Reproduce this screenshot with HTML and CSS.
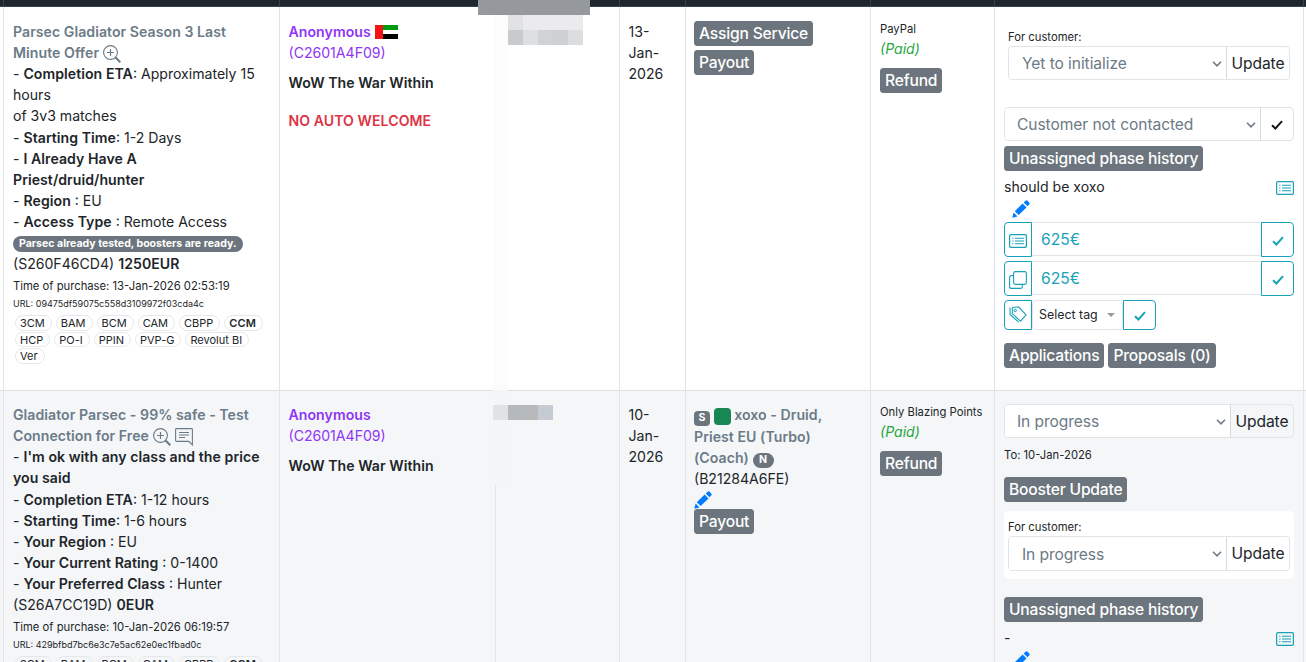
FILE: index.html
```
<!DOCTYPE html>
<html lang="en">
<head>
    <meta charset="UTF-8">
    <meta name="viewport" content="width=device-width, initial-scale=1.0">
    <title>Orders</title>
    <link rel="stylesheet" href="styles.css">
</head>
<body>
    <svg class="defs" width="0" height="0">
        <symbol id="zoom" viewBox="0 0 18 18">
            <circle cx="7.5" cy="7.5" r="6.9" fill="none" stroke="currentColor" stroke-width="1.1"/>
            <path d="M7.5 4v7M4 7.5h7" stroke="currentColor" stroke-width="1.2"/>
            <path d="M12.3 12.3l5 5" stroke="currentColor" stroke-width="2"/>
        </symbol>
        <symbol id="comment" viewBox="0 0 18 18">
            <path d="M1.5.6h15q.9 0 .9.9v15.4l-3.6-3.5H1.5q-.9 0-.9-.9v-11q0-.9.9-.9z" fill="none" stroke="currentColor" stroke-width="1.1"/>
            <path d="M4 4.5h10M4 7h10M4 9.5h6" stroke="currentColor" stroke-width="1.1"/>
        </symbol>
        <symbol id="list" viewBox="0 0 18 14">
            <rect x=".6" y=".6" width="16.8" height="12.8" rx="1.3" fill="none" stroke="currentColor" stroke-width="1.2"/>
            <path d="M6 4.2h9M6 7h9M6 9.8h9M3.2 4.2h1.3M3.2 7h1.3M3.2 9.8h1.3" stroke="currentColor" stroke-width="1.1"/>
        </symbol>
        <symbol id="copy" viewBox="0 0 18 18">
            <rect x="4.6" y=".6" width="12.8" height="12.8" rx="1.8" fill="none" stroke="currentColor" stroke-width="1.1"/>
            <path d="M4 4.6H2.4Q.6 4.6.6 6.4v9q0 2 2 2h9q1.8 0 1.8-1.8V14" fill="none" stroke="currentColor" stroke-width="1.1"/>
        </symbol>
        <symbol id="tags" viewBox="0 0 18 17">
            <path d="M3.4 1.5L9.5 1l7.6 7.9-5.6 6.3-8.2-7.5z" fill="none" stroke="currentColor" stroke-width="1.1" stroke-linejoin="round"/>
            <path d="M1 1.5v7l8.6 7.6" fill="none" stroke="currentColor" stroke-width="1.1"/>
            <circle cx="6.2" cy="4.4" r="1.2" fill="none" stroke="currentColor"/>
        </symbol>
        <symbol id="pencil" viewBox="0 0 18 18">
            <path d="M.3 17.7l1.3-5.2 3.9 3.9zM2.8 11.2l7.8-7.6 3.9 3.9-7.8 7.6zM11.7 2.6L13.6.8q1-.9 2 0l1.6 1.7q.9 1 0 1.9l-1.7 1.9z" fill="currentColor"/>
        </symbol>
        <symbol id="check" viewBox="0 0 12 10">
            <path d="M1 5.2l3.4 3.3L11 1.2" fill="none" stroke="currentColor" stroke-width="2"/>
        </symbol>
        <symbol id="chevron" viewBox="0 0 10 6">
            <path d="M1 .8l4 4 4-4" fill="none" stroke="currentColor" stroke-width="1.6"/>
        </symbol>
    </svg>

    <div class="orders">
        <div class="row head">
            <div></div><div></div><div></div><div></div><div></div><div></div><div></div><div></div>
        </div>

        <div class="row first">
            <div class="cell order">
                <a class="title">Parsec Gladiator Season 3 Last Minute Offer <svg class="icon"><use href="#zoom"/></svg></a>
                <div>- <b>Completion ETA</b>: Approximately 15 hours<br>of 3v3 matches</div>
                <div>- <b>Starting Time</b>: 1-2 Days</div>
                <div>- <b>I Already Have A Priest/druid/hunter</b></div>
                <div>- <b>Region</b> : EU</div>
                <div>- <b>Access Type</b> : Remote Access</div>
                <div class="note"><span class="pill">Parsec already tested, boosters are ready.</span></div>
                <div>(S260F46CD4) <b>1250EUR</b></div>
                <div class="time">Time of purchase: 13-Jan-2026 02:53:19</div>
                <div class="url">URL: 09475df59075c558d3109972f03cda4c</div>
                <div class="tags">
                    <span>3CM</span><span>BAM</span><span>BCM</span><span>CAM</span><span>CBPP</span><span><b>CCM</b></span>
                    <span>HCP</span><span>PO-I</span><span>PPIN</span><span>PVP-G</span><span>Revolut BI</span>
                    <span>Ver</span>
                </div>
            </div>
            <div class="cell">
                <div class="customer"><b>Anonymous</b> <svg class="flag" viewBox="0 0 23 14"><path fill="#009a10" d="M0 0h23v5H0z"/><path fill="#fff" d="M0 5h23v4H0z"/><path d="M0 9h23v5H0z"/><path fill="#f01414" d="M0 0h8v14H0z"/></svg><br>(C2601A4F09)</div>
                <div class="game">WoW The War Within</div>
                <div class="warning">NO AUTO WELCOME</div>
            </div>
            <div class="cell"></div>
            <div class="cell">13-<br>Jan-<br>2026</div>
            <div class="cell actions">
                <button class="btn">Assign Service</button>
                <button class="btn">Payout</button>
            </div>
            <div class="cell pay">
                <div class="method">PayPal</div>
                <div class="paid">(Paid)</div>
                <button class="btn">Refund</button>
            </div>
            <div class="cell status">
                <div class="panel">
                    <div class="label">For customer:</div>
                    <div class="group">
                        <div class="select">Yet to initialize<svg><use href="#chevron"/></svg></div>
                        <button class="update">Update</button>
                    </div>
                </div>
                <div class="group contact">
                    <div class="select">Customer not contacted<svg><use href="#chevron"/></svg></div>
                    <button class="tick"><svg><use href="#check"/></svg></button>
                </div>
                <button class="btn">Unassigned phase history</button>
                <div class="remark"><span>should be xoxo</span><svg class="list"><use href="#list"/></svg></div>
                <svg class="pencil"><use href="#pencil"/></svg>
                <div class="price">
                    <div class="addon"><svg class="list"><use href="#list"/></svg></div>
                    <div class="amount">625€</div>
                    <button class="tick"><svg><use href="#check"/></svg></button>
                </div>
                <div class="price">
                    <div class="addon"><svg class="copy"><use href="#copy"/></svg></div>
                    <div class="amount">625€</div>
                    <button class="tick"><svg><use href="#check"/></svg></button>
                </div>
                <div class="price tagpick">
                    <div class="addon"><svg class="tagicon"><use href="#tags"/></svg></div>
                    <div class="amount">Select tag<i class="caret"></i></div>
                    <button class="tick"><svg><use href="#check"/></svg></button>
                </div>
                <div class="buttons">
                    <button class="btn">Applications</button>
                    <button class="btn">Proposals (0)</button>
                </div>
            </div>
            <div class="cell"></div>
        </div>

        <div class="row second">
            <div class="cell order">
                <a class="title">Gladiator Parsec - 99% safe - Test Connection for Free <svg class="icon"><use href="#zoom"/></svg> <svg class="icon"><use href="#comment"/></svg></a>
                <div>- <b>I'm ok with any class and the price you said</b></div>
                <div>- <b>Completion ETA</b>: 1-12 hours</div>
                <div>- <b>Starting Time</b>: 1-6 hours</div>
                <div>- <b>Your Region</b> : EU</div>
                <div>- <b>Your Current Rating</b> : 0-1400</div>
                <div>- <b>Your Preferred Class</b> : Hunter</div>
                <div>(S26A7CC19D) <b>0EUR</b></div>
                <div class="time">Time of purchase: 10-Jan-2026 06:19:57</div>
                <div class="url">URL: 429bfbd7bc6e3c7e5ac62e0ec1fbad0c</div>
                <div class="tags">
                    <span>3CM</span><span>BAM</span><span>BCM</span><span>CAM</span><span>CBPP</span><span><b>CCM</b></span>
                </div>
            </div>
            <div class="cell">
                <div class="customer"><b>Anonymous</b><br>(C2601A4F09)</div>
                <div class="game">WoW The War Within</div>
            </div>
            <div class="cell"></div>
            <div class="cell">10-<br>Jan-<br>2026</div>
            <div class="cell booster">
                <a class="title"><span class="mark">S</span> <span class="square"></span> xoxo - Druid, Priest EU (Turbo) (Coach) <span class="mark round">N</span></a>
                <div>(B21284A6FE)</div>
                <svg class="pencil"><use href="#pencil"/></svg>
                <button class="btn">Payout</button>
            </div>
            <div class="cell pay">
                <div class="method">Only Blazing Points</div>
                <div class="paid">(Paid)</div>
                <button class="btn">Refund</button>
            </div>
            <div class="cell status">
                <div class="group">
                    <div class="select">In progress<svg><use href="#chevron"/></svg></div>
                    <button class="update">Update</button>
                </div>
                <div class="due">To: 10-Jan-2026</div>
                <button class="btn">Booster Update</button>
                <div class="panel">
                    <div class="label">For customer:</div>
                    <div class="group">
                        <div class="select">In progress<svg><use href="#chevron"/></svg></div>
                        <button class="update">Update</button>
                    </div>
                </div>
                <button class="btn">Unassigned phase history</button>
                <div class="remark"><span>-</span><svg class="list"><use href="#list"/></svg></div>
                <svg class="pencil"><use href="#pencil"/></svg>
            </div>
            <div class="cell"></div>
        </div>
    </div>

    <!-- hidden customer contacts -->
    <div class="mask mask-head"></div>
    <div class="mask mask-col"></div>
    <div class="mask mask-a">
        <i class="a1"></i><i class="a2"></i><i class="a2"></i><i class="a2"></i><i class="a2"></i>
        <i class="a3"></i><i class="a4"></i><i class="a5"></i><i class="a6"></i><i class="a7"></i>
    </div>
    <div class="mask mask-col2"></div>
    <div class="mask mask-b"><i class="a1"></i><i class="b2"></i><i class="b3"></i><i class="b4"></i></div>
</body>
</html>
```
FILE: styles.css
```
* {
    box-sizing: border-box;
}
body {
    margin: 0;
    height: 662px;
    overflow: hidden;
    position: relative;
    background: #fff;
    color: #212529;
    font-family: Inter, "Liberation Sans", sans-serif;
    font-size: 14.08px;
    line-height: 21.12px;
}
svg {
    display: block;
}
.defs {
    position: absolute;
}
b, .title, .game, .warning {
    font-weight: 600;
    letter-spacing: 0.06px;
}
button {
    margin: 0;
    font-family: inherit;
    cursor: pointer;
}
.row {
    display: grid;
    grid-template-columns: 276px 216px 124px 66px 185px 124px 309px 1fr;
    padding-left: 3px;
}
.head {
    height: 7px;
    background: #1e262e;
    border-bottom: 1px solid #38424b;
}
.head div {
    border-left: 1px solid #38424b;
}
.cell {
    padding: 13px 9px 0 8.5px;
    border-left: 1px solid #e1e5e8;
    min-width: 0;
}
.first {
    height: 383px;
}
.first .cell {
    padding-top: 14px;
}
.second {
    height: 300px;
    background: #f4f6f8;
    border-top: 1px solid #dee2e6;
}
.row .order {
    padding-left: 9px;
    padding-right: 12px;
}
.first .order {
    padding-top: 13.9px;
}
.second .order {
    padding-top: 13.1px;
}
.title {
    display: block;
    color: #6b7b88;
}
.icon {
    display: inline-block;
    width: 18px;
    height: 18px;
    margin-right: 1px;
    vertical-align: -5px;
}

/* order details */
.note {
    height: 21px;
    padding-top: 4px;
}
.pill {
    display: block;
    width: 230px;
    height: 16px;
    padding-left: 6px;
    border-radius: 8px;
    background: #6c757d;
    color: #fff;
    font-size: 10.56px;
    font-weight: 700;
    line-height: 15px;
    white-space: nowrap;
}
.time {
    margin-top: 3px;
    font-size: 11.26px;
    line-height: 18px;
}
.url {
    font-size: 9.01px;
    line-height: 17px;
}
.tags {
    display: flex;
    flex-wrap: wrap;
    gap: 1px 4px;
    width: 252px;
    margin-top: 3px;
    padding-left: 2px;
    font-size: 11px;
    line-height: 14px;
}
.tags span {
    height: 15.5px;
    padding: 0 6px 0 4px;
    border: 1px solid #e4e8eb;
    border-radius: 8px;
}

/* customer */
.customer {
    color: #8f35f7;
}
.flag {
    display: inline-block;
    width: 23px;
    height: 14px;
    vertical-align: -2px;
}
.game {
    margin-top: 9px;
}
.warning {
    margin-top: 17px;
    color: #dc3545;
}

.btn {
    display: block;
    height: 25px;
    padding: 0 4px;
    border: 1px solid #6c757d;
    border-radius: 3px;
    background: #6c757d;
    color: #fff;
    font-size: 15.6px;
    font-weight: 500;
    line-height: 23px;
    letter-spacing: -0.18px;
    white-space: nowrap;
}
.row .actions, .row .booster {
    padding-left: 8px;
}
.actions .btn {
    margin-bottom: 4px;
}
.row .pay {
    padding-left: 9px;
}
.method {
    font-size: 11.26px;
    line-height: 17px;
    white-space: nowrap;
}
.pay .btn {
    margin-top: 9px;
}
.paid {
    color: #28a745;
    font-style: italic;
    line-height: 21px;
}
.mark {
    display: inline-block;
    height: 15px;
    padding: 0 4.5px;
    border-radius: 4px;
    background: #6c757d;
    color: #fff;
    font-size: 10.56px;
    font-weight: 700;
    line-height: 14px;
    vertical-align: -0.5px;
}
.mark.round {
    padding: 0 6.5px;
    border-radius: 8px;
}
.square {
    display: inline-block;
    width: 17px;
    height: 17px;
    border-radius: 4px;
    background: #198754;
    vertical-align: -5px;
}
.pencil {
    width: 18px;
    height: 18px;
    margin-top: 2px;
    color: #007bff;
}

/* status column */
.row .status {
    padding-left: 9px;
}
.first .status {
    padding-top: 15px;
}
.panel {
    height: 69px;
    padding: 4px;
    border-radius: 5px;
    background: #fff;
}
.label {
    height: 20px;
    font-size: 11.26px;
}
.group {
    display: flex;
    height: 34px;
    border: 1px solid #e1e5e8;
    border-radius: 4px;
    font-size: 15.6px;
    letter-spacing: -0.08px;
}
.select {
    display: flex;
    flex: 1;
    align-items: center;
    justify-content: space-between;
    padding: 1px 4px 0 12px;
    border-radius: 3px 0 0 3px;
    background: #fff;
    color: #6c7a86;
}
.panel .select {
    padding-left: 13px;
}
.select svg {
    width: 10px;
    height: 6px;
}
.update {
    width: 63px;
    padding: 0;
    border: 0;
    border-left: 1px solid #d5dade;
    background: none;
    color: #212529;
    font-size: 15.6px;
    letter-spacing: -0.1px;
}
.contact {
    margin: 16px 0 5px;
}
.contact .select {
    padding-right: 4px;
}
.tick {
    display: flex;
    align-items: center;
    justify-content: center;
    width: 33px;
    padding: 2px 0 0;
    border: 0;
    border-left: 1px solid #d5dade;
    background: none;
    color: #14191d;
}
.tick svg {
    width: 12px;
    height: 10px;
}
.remark {
    display: flex;
    align-items: center;
    justify-content: space-between;
    height: 27px;
    padding-top: 6px;
}
.remark span {
    margin-top: -2px;
}
.list {
    width: 18px;
    height: 14px;
    color: #17a2b8;
}
.status .pencil {
    margin: 2px 0 4px 8px;
}
.price {
    display: flex;
    height: 35px;
    margin-bottom: 4px;
    color: #17a2b8;
    font-size: 15.6px;
}
.addon {
    display: flex;
    align-items: center;
    justify-content: center;
    width: 28px;
    padding-top: 2px;
    border: 1px solid #17a2b8;
    border-radius: 4px 0 0 4px;
}
.copy {
    width: 18px;
    height: 18px;
}
.tagicon {
    width: 18px;
    height: 17px;
    margin-top: -4px;
}
.amount {
    flex: 1;
    height: 34px;
    padding-left: 9px;
    border: solid #e1e5e8;
    border-width: 1px 0;
    line-height: 33px;
}
.price .tick {
    border: 1px solid #17a2b8;
    border-radius: 0 4px 4px 0;
    color: #17a2b8;
}
.tagpick {
    width: 152px;
    height: 30px;
}
.tagpick .amount {
    display: flex;
    align-items: center;
    justify-content: space-between;
    height: 30px;
    padding: 0 7px 0 6px;
    border-width: 1px;
    border-radius: 4px;
    color: #212529;
    font-size: 12.4px;
    line-height: 28px;
}
.caret {
    border: 4px solid transparent;
    border-top-color: #999;
    border-bottom: 0;
}
.buttons {
    display: flex;
    gap: 4px;
    margin-top: 13px;
}
.due {
    margin: 7px 0 11px;
    font-size: 11.26px;
}
.second .panel {
    height: 68px;
    margin: 9px 0 18px;
    padding-top: 6px;
}
.second .panel .group {
    height: 35px;
}
.second .label {
    height: 19px;
}
.first .label {
    line-height: 22px;
}

/* pixelated blocks over private data */
.mask {
    position: absolute;
    display: flex;
    flex-wrap: wrap;
}
.mask i {
    width: 15px;
    height: 15px;
}
.mask-head {
    left: 478px;
    top: 0;
    width: 112px;
    height: 15px;
    background: #95999d;
}
.mask-col {
    left: 493px;
    top: 15px;
    width: 15px;
    height: 375px;
    background: #fcfcfc;
}
.mask-a {
    left: 508px;
    top: 15px;
    width: 75px;
}
.mask-col2 {
    left: 493px;
    top: 390px;
    width: 15px;
    height: 95px;
    background: #f3f5f7;
}
.mask-b {
    left: 493px;
    top: 405px;
    width: 60px;
}
.a1 { background: #e1e2e4; }
.a2 { background: #ebebed; }
.a3 { background: #c9cacc; }
.a4 { background: #dce0e3; }
.a5 { background: #d0d2d3; }
.a6 { background: #cdd1d4; }
.a7 { background: #dcdddf; }
.b2 { background: #b3b9bd; }
.b3 { background: #b7b9bb; }
.b4 { background: #c4cbd3; }
```
